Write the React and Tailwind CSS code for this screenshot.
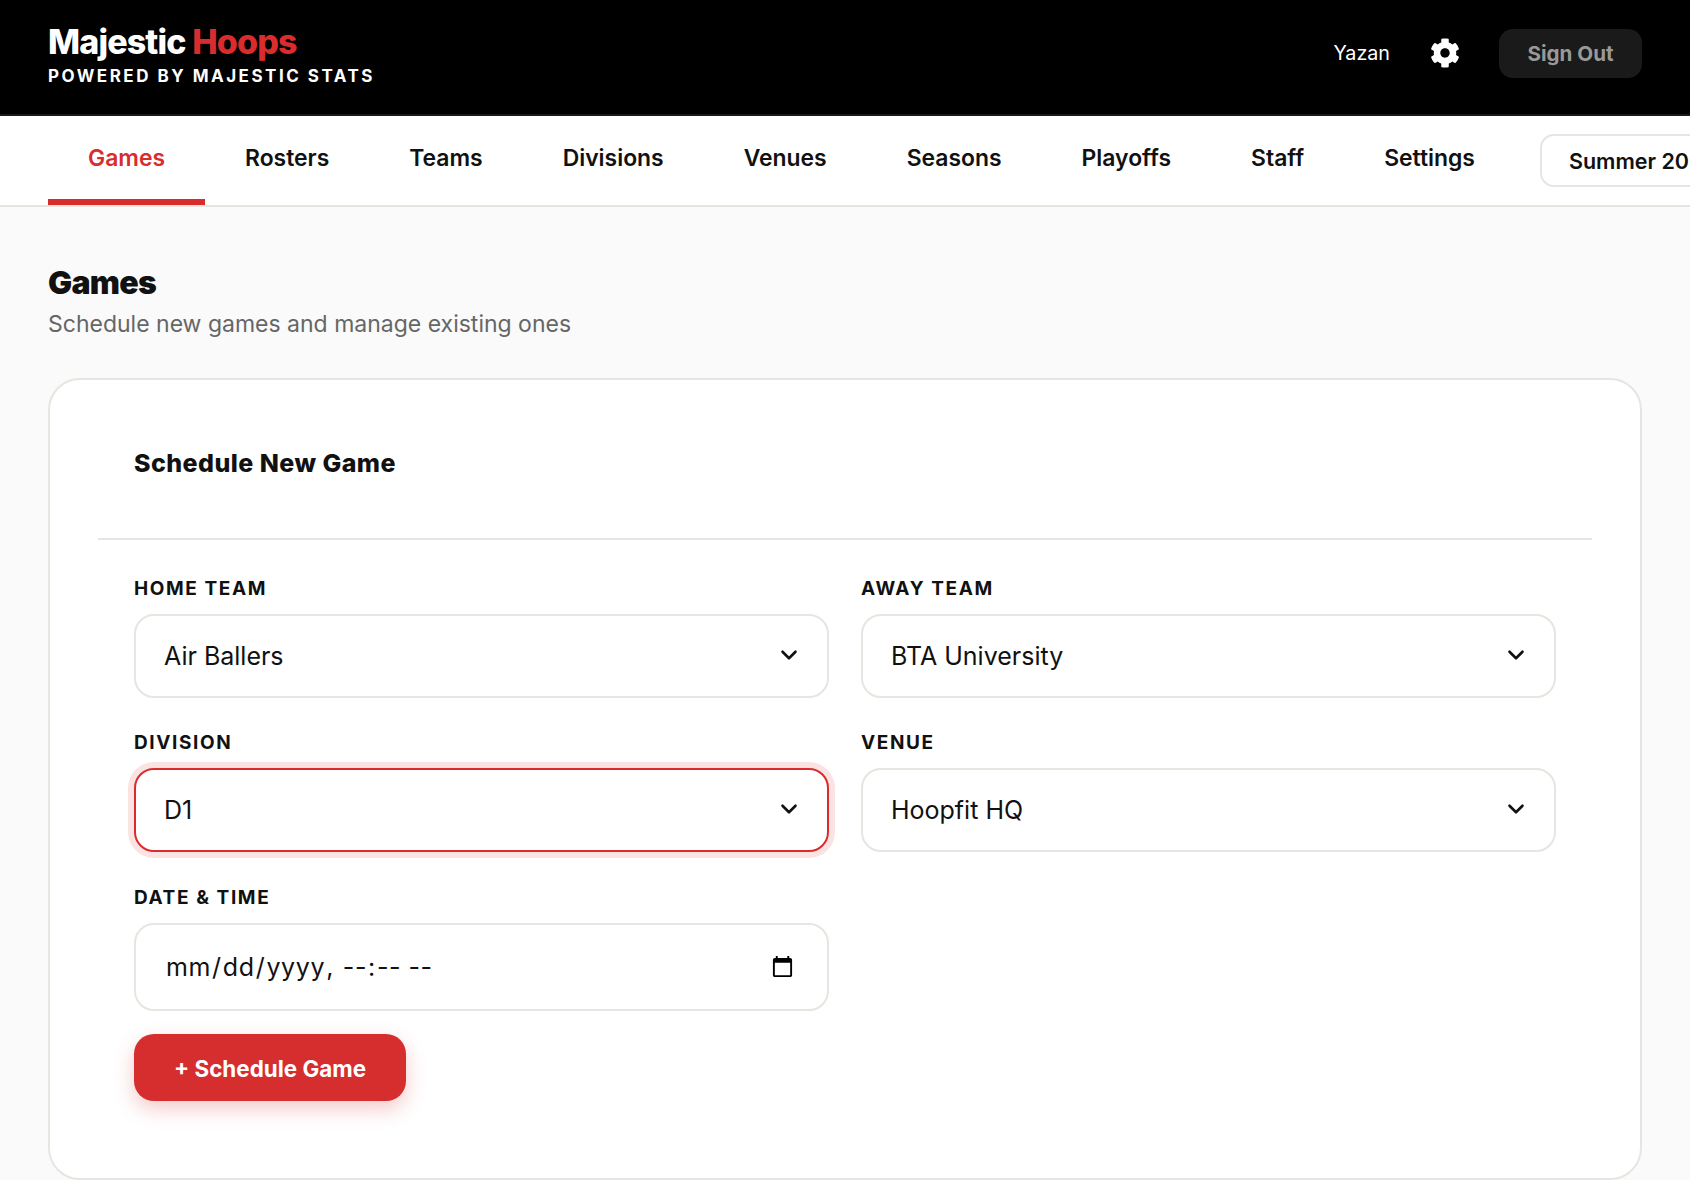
import React from 'react';
import { FaCog } from 'react-icons/fa';
import { ChevronDown } from 'lucide-react';

const tabs = ['Games', 'Rosters', 'Teams', 'Divisions', 'Venues', 'Seasons', 'Playoffs', 'Staff', 'Settings'];

const SelectField = ({ label, value, focused }) => (
  <div>
    <label className="block mb-[13px] text-[19px] leading-[24px] font-bold tracking-[1.6px] uppercase text-[#111111]">{label}</label>
    <div className="relative">
      <select
        defaultValue={value}
        className={`block w-full h-[84px] pl-[28px] pr-[60px] pt-[1px] appearance-none bg-white rounded-[20px] border-2 text-[25px] text-[#111111] outline-none ${focused ? 'border-[#d92d2d] ring-[6px] ring-[#fbe3e3]' : 'border-[#e8e5e0]'}`}
      >
        <option>{value}</option>
      </select>
      <ChevronDown className="absolute right-[27px] top-[28px] w-[26px] h-[26px] text-[#111111] pointer-events-none" strokeWidth={2.4} />
    </div>
  </div>
);

export default function App() {
  return (
    <div className="w-[1690px] h-[1180px] overflow-hidden bg-[#fafafa] font-['Inter',sans-serif] text-[#111111]">
      {/* Top bar */}
      <header className="h-[116px] bg-black border-b-2 border-[#1a1a1a] px-[48px] pb-[8px] flex items-center justify-between">
        <div className="mt-[2px]">
          <h1 className="text-[34px] leading-[40px] font-extrabold tracking-[-0.85px] text-white">
            Majestic <span className="text-[#d92d2d]">Hoops</span>
          </h1>
          <p className="mt-[3px] text-[17px] leading-[22px] font-bold tracking-[2.5px] uppercase text-white">Powered by Majestic Stats</p>
        </div>
        <div className="flex items-center">
          <span className="pt-[2px] text-[19.7px] text-white">Yazan</span>
          <FaCog className="ml-[40px] w-[30px] h-[30px] text-white" />
          <button className="ml-[39px] w-[143px] h-[49px] pt-[2px] rounded-[14px] bg-[#1a1a1a] text-[20.6px] font-bold text-[#999999]">Sign Out</button>
        </div>
      </header>

      {/* Tabs */}
      <nav className="h-[91px] bg-white border-b-2 border-[#e8e5e0] pl-[48px] flex items-start">
        {tabs.map((tab, i) => (
          <a
            key={tab}
            href="#"
            className={`shrink-0 h-[89px] px-[40px] pt-[28px] text-[22.9px] leading-[28px] font-semibold border-b-[6px] ${i === 0 ? 'text-[#d92d2d] border-[#d92d2d]' : 'text-[#111111] border-transparent'}`}
          >
            {tab}
          </a>
        ))}
        <div className="ml-[25px] mt-[18px] shrink-0 h-[53px] px-[27px] pt-[1px] flex items-center bg-white border-2 border-[#e8e5e0] rounded-[14px] text-[21.5px] font-semibold">
          Summer 2025
        </div>
      </nav>

      <main className="px-[48px] pt-[56px]">
        <h2 className="text-[32px] leading-[40px] font-black tracking-[-0.7px]">Games</h2>
        <p className="mt-[5px] text-[23px] leading-[32px] text-[#666666]">Schedule new games and manage existing ones</p>

        {/* Card */}
        <section className="mt-[38px] h-[802px] bg-white border-2 border-[#e8e5e0] rounded-[32px] px-[48px]">
          <div className="h-[160px] px-[36px] pt-[67px] border-b-2 border-[#e8e5e0]">
            <h3 className="text-[25px] leading-[32px] font-extrabold tracking-[0.45px]">Schedule New Game</h3>
          </div>
          <div className="px-[36px] pt-[37px]">
            <div className="grid grid-cols-2 gap-x-[32px] gap-y-[33px]">
              <SelectField label="Home Team" value="Air Ballers" />
              <SelectField label="Away Team" value="BTA University" />
              <SelectField label="Division" value="D1" focused />
              <SelectField label="Venue" value="Hoopfit HQ" />
              <div className="mt-[1px]">
                <label className="block mb-[13px] text-[19px] leading-[24px] font-bold tracking-[1.6px] uppercase text-[#111111]">Date &amp; Time</label>
                <input
                  type="datetime-local"
                  className="block w-full h-[88px] pl-[29px] pr-[30px] pt-[1px] bg-white rounded-[20px] border-2 border-[#e8e5e0] text-[25px] tracking-[0.65px] text-[#111111] outline-none"
                />
              </div>
            </div>
            <button className="mt-[23px] w-[272px] h-[67px] pt-[2px] rounded-[20px] bg-[#d62e2e] text-white text-[22.4px] font-bold shadow-[0_8px_20px_rgba(217,45,45,0.25)]">
              + Schedule Game
            </button>
          </div>
        </section>
      </main>
    </div>
  );
}
